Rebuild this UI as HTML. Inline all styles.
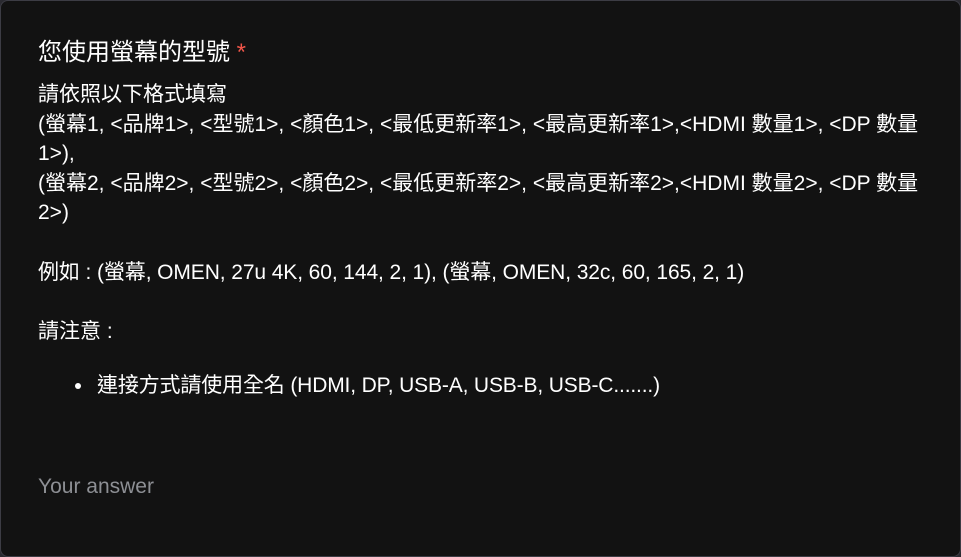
<!DOCTYPE html>
<html><head><meta charset="utf-8"><style>
html,body{margin:0;padding:0;width:961px;height:557px;background:#2a2a30;overflow:hidden}
.card{position:absolute;left:0;top:0;width:959px;height:555px;border:1px solid #3c3c44;border-radius:8px;background:#121212}
.t{position:absolute;left:38px;color:#fff;font-family:"Liberation Sans","Noto Sans CJK TC",sans-serif;font-size:21px;white-space:nowrap;line-height:30px}
.r{color:#f2564a}
.ph{color:#8d8f94;font-size:21px}
.dot{position:absolute;left:75px;top:383px;width:6px;height:6px;border-radius:50%;background:#fff}
</style></head><body>
<div class="card"></div>
<div class="t" style="top:38px;font-size:24px">您使用螢幕的型號 <span class="r">*</span></div>
<div class="t" style="top:80px">請依照以下格式填寫</div>
<div class="t" style="top:110px">(螢幕1, &lt;品牌1&gt;, &lt;型號1&gt;, &lt;顏色1&gt;, &lt;最低更新率1&gt;, &lt;最高更新率1&gt;,&lt;HDMI 數量1&gt;, &lt;DP 數量</div>
<div class="t" style="top:139px">1&gt;),</div>
<div class="t" style="top:169px">(螢幕2, &lt;品牌2&gt;, &lt;型號2&gt;, &lt;顏色2&gt;, &lt;最低更新率2&gt;, &lt;最高更新率2&gt;,&lt;HDMI 數量2&gt;, &lt;DP 數量</div>
<div class="t" style="top:198px">2&gt;)</div>
<div class="t" style="top:258px;letter-spacing:-0.1px">例如 : (螢幕, OMEN, 27u 4K, 60, 144, 2, 1), (螢幕, OMEN, 32c, 60, 165, 2, 1)</div>
<div class="t" style="top:317px">請注意 :</div>
<div class="dot"></div>
<div class="t" style="top:371px;left:97px;letter-spacing:-0.15px">連接方式請使用全名 (HDMI, DP, USB-A, USB-B, USB-C.......)</div>
<div class="t ph" style="top:472px">Your answer</div>
</body></html>
